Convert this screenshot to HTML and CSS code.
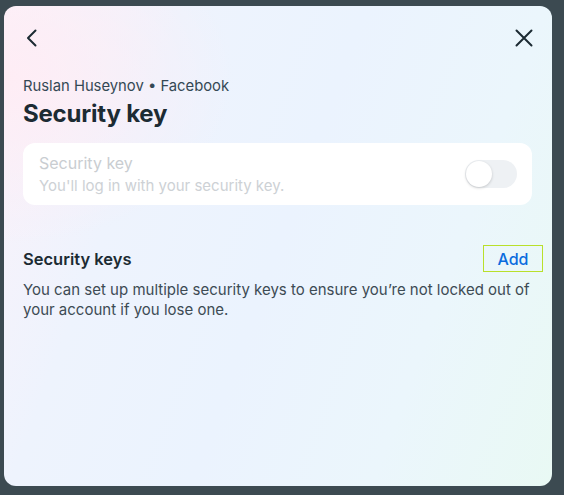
FILE: index.html
```html
<!DOCTYPE html>
<html>
<head>
<meta charset="utf-8">
<link rel="stylesheet" href="styles.css">
</head>
<body>
<div class="backdrop">
  <div class="modal">
    <div class="topbar">
      <button class="icon-btn" aria-label="Back">
        <svg width="24" height="24" viewBox="0 0 24 24"><path d="M15.5 4.5 8 12l7.5 7.5" fill="none" stroke="#1c2b33" stroke-width="2" stroke-linecap="round" stroke-linejoin="round"/></svg>
      </button>
      <button class="icon-btn" aria-label="Close">
        <svg width="24" height="24" viewBox="0 0 24 24"><path d="M4.5 4.5l15 15M19.5 4.5l-15 15" fill="none" stroke="#1c2b33" stroke-width="2" stroke-linecap="round"/></svg>
      </button>
    </div>
    <div class="content">
      <div class="account">Ruslan Huseynov • Facebook</div>
      <h1 class="title">Security key</h1>
      <div class="card">
        <div class="card-text">
          <div class="card-title">Security key</div>
          <div class="card-sub">You'll log in with your security key.</div>
        </div>
        <div class="toggle"><div class="knob"></div></div>
      </div>
      <div class="section-head">
        <div class="section-title">Security keys</div>
        <button class="add-btn">Add</button>
      </div>
      <p class="desc">You can set up multiple security keys to ensure you’re not locked out of your account if you lose one.</p>
    </div>
  </div>
</div>
</body>
</html>
```
FILE: styles.css
```css
html, body {
  margin: 0;
  padding: 0;
}
body {
  background: #3c4a51;
  font-family: Inter, "Noto Sans", sans-serif;
  width: 564px;
  height: 495px;
  overflow: hidden;
}
.backdrop {
  padding: 6px 12px 0 4px;
}
.modal {
  width: 548px;
  height: 480px;
  border-radius: 12px;
  background:
    radial-gradient(ellipse 60% 50% at 0% 15%, rgba(255, 236, 244, 0.9), rgba(255, 236, 244, 0) 70%),
    linear-gradient(110deg, #fbf2fa 0%, #eef3fd 25%, #ebf3fe 50%, #ebf6fc 75%, #e9f9f4 100%);
  box-sizing: border-box;
}
.topbar {
  display: flex;
  justify-content: space-between;
  padding: 20px 16px 0 16px;
}
.icon-btn {
  background: none;
  border: 0;
  padding: 0;
  width: 24px;
  height: 24px;
  display: flex;
}
.content {
  padding: 0 20px 0 19px;
}
.account {
  margin-top: 26px;
  font-size: 14.8px;
  color: #344854;
  line-height: 20px;
}
.title {
  margin: 3px 0 0 0;
  font-size: 24px;
  font-weight: 700;
  color: #1c2b33;
  line-height: 30px;
  letter-spacing: -0.2px;
}
.card {
  margin-top: 14px;
  background: #ffffff;
  border-radius: 12px;
  height: 62px;
  display: flex;
  align-items: center;
  justify-content: space-between;
  padding: 0 15px 0 16px;
  box-sizing: border-box;
}
.card-title {
  font-size: 16px;
  color: #c9cdd1;
  line-height: 20px;
}
.card-sub {
  font-size: 15px;
  color: #cdd1d5;
  line-height: 20px;
  margin-top: 3px;
}
.toggle {
  width: 52px;
  height: 28px;
  border-radius: 14px;
  background: #eef1f4;
  display: flex;
  align-items: center;
  padding: 1px;
  box-sizing: border-box;
}
.knob {
  width: 26px;
  height: 26px;
  border-radius: 50%;
  background: #fff;
  box-shadow: 0 1px 3px rgba(0, 0, 0, 0.18);
}
.section-head {
  margin-top: 40px;
  display: flex;
  justify-content: space-between;
  align-items: center;
  margin-right: -11px;
}
.section-title {
  font-size: 16.5px;
  font-weight: 600;
  color: #1c2b33;
}
.add-btn {
  background: none;
  border: 1px solid #b9e02b;
  font-family: inherit;
  font-size: 16px;
  color: #0a6cde;
  width: 60px;
  height: 27px;
  padding: 0;
  font-weight: 500;
}
.desc {
  margin: 8px 0 0 0;
  font-size: 15px;
  line-height: 20px;
  color: #3d4b54;
}
```
